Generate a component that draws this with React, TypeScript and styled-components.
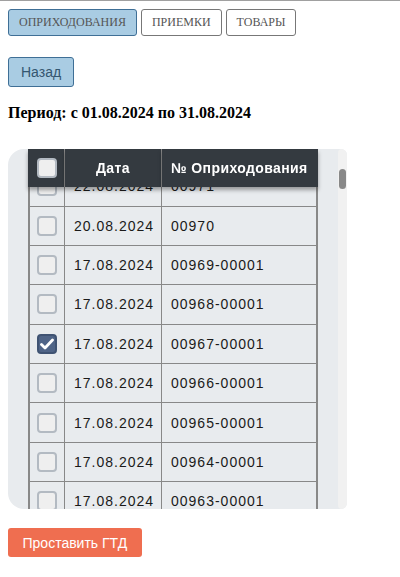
import React, { useLayoutEffect, useRef } from 'react';
import styled, { createGlobalStyle } from 'styled-components';

const Global = createGlobalStyle`
  html, body { margin: 0; padding: 0; background: #fff; }
  body { border-top: 1px solid #a0a0a0; }
`;

const Page = styled.div`
  padding: 8px 8px 0 8px;
  display: flex;
  flex-direction: column;
  align-items: flex-start;
`;

const Tabs = styled.div`
  display: flex;
  gap: 4px;
`;

const Tab = styled.button<{ $active?: boolean }>`
  height: 27px;
  padding: 0 10px;
  box-sizing: border-box;
  font-family: 'Liberation Serif', 'Times New Roman', serif;
  font-size: 12px;
  text-transform: uppercase;
  color: #555;
  background: ${(p) => (p.$active ? '#a9cce3' : '#fff')};
  border: 1px solid ${(p) => (p.$active ? '#3f6f96' : '#777')};
  border-radius: 3px;
  cursor: pointer;
`;

const BackButton = styled.button`
  margin-top: 21px;
  height: 30px;
  padding: 0 12px;
  box-sizing: border-box;
  font-family: 'Liberation Sans', Arial, sans-serif;
  font-size: 14px;
  color: #34566f;
  background: #a9cce3;
  border: 1px solid #3f6f96;
  border-radius: 3px;
`;

const Period = styled.div`
  margin-top: 17px;
  font-family: 'Liberation Serif', 'Times New Roman', serif;
  font-weight: bold;
  font-size: 16px;
  color: #000;
`;

const Frame = styled.div`
  margin-top: 27px;
  width: 339px;
  height: 360px;
  display: flex;
  background: #e8ebee;
  border-radius: 16px 6px 6px 16px;
  overflow: hidden;
`;

const Scroller = styled.div`
  flex: 1;
  height: 100%;
  overflow-y: scroll;
  scrollbar-width: none;
  &::-webkit-scrollbar { display: none; }
`;

const Track = styled.div`
  width: 9px;
  height: 100%;
  padding-top: 20px;
  box-sizing: border-box;
  background: #f1f1f1;
  border-radius: 4px;
`;

const Thumb = styled.div`
  width: 7px;
  height: 20px;
  margin: 0 auto;
  background: #888;
  border-radius: 4px;
`;

const Table = styled.table`
  margin: 0 20px;
  width: 290px;
  border-collapse: separate;
  border-spacing: 0;
  table-layout: fixed;
  font-family: 'Liberation Sans', Arial, sans-serif;
  font-size: 14px;
  letter-spacing: 1px;
`;

const Th = styled.th<{ $w: number; $center?: boolean }>`
  position: sticky;
  top: 0;
  z-index: 2;
  width: ${(p) => p.$w}px;
  height: 38px;
  padding: 0 9px;
  box-sizing: border-box;
  background: #343a40;
  color: #fff;
  font-weight: bold;
  letter-spacing: 0.4px;
  white-space: nowrap;
  text-align: ${(p) => (p.$center ? 'center' : 'left')};
  border-right: 1px solid #888;
  box-shadow: 0 3px 4px rgba(0, 0, 0, 0.35);
  &:first-child { border-left: 2px solid #343a40; padding: 0 0 0 7px; }
  &:last-child { border-right: 2px solid #343a40; }
`;

const Td = styled.td`
  height: 38.4px;
  padding: 0 9px;
  box-sizing: content-box;
  color: #1a1a1a;
  border-right: 1px solid #888;
  border-bottom: 1px solid #888;
  white-space: nowrap;
  &:first-child { border-left: 2px solid #888; padding: 0 0 0 7px; }
  &:last-child { border-right: 2px solid #888; }
`;

const Box = styled.span<{ $checked?: boolean }>`
  display: flex;
  align-items: center;
  justify-content: center;
  width: 20px;
  height: 20px;
  box-sizing: border-box;
  border-radius: 4px;
  border: 2px solid ${(p) => (p.$checked ? '#3f5373' : '#b3bac2')};
  background: ${(p) => (p.$checked ? '#4f6487' : '#efefef')};
`;

const Submit = styled.button`
  margin-top: 19px;
  height: 29px;
  padding: 0 14.5px;
  box-sizing: border-box;
  font-family: 'Liberation Sans', Arial, sans-serif;
  font-size: 14px;
  color: #fff;
  background: #ef6e50;
  border: none;
  border-radius: 3px;
`;

const Check = ({ checked }: { checked?: boolean }) => (
  <Box $checked={checked}>
    {checked && (
      <svg width="14" height="12" viewBox="0 0 14 12">
        <path d="M1.5 6.5 L5 10 L12.5 2" fill="none" stroke="#fff" strokeWidth="2.8" strokeLinecap="round" strokeLinejoin="round" />
      </svg>
    )}
  </Box>
);

type Row = { date: string; num: string; checked?: boolean };

const buildRows = (): Row[] => {
  const rows: Row[] = [];
  const early = ['31.08.2024', '30.08.2024', '29.08.2024', '28.08.2024', '27.08.2024', '26.08.2024', '24.08.2024', '23.08.2024', '22.08.2024'];
  early.forEach((d, i) => rows.push({ date: d, num: String(979 - i).padStart(5, '0') }));
  rows.push({ date: '20.08.2024', num: '00970' });
  for (let n = 969; n >= 963; n--) {
    rows.push({ date: '17.08.2024', num: `00${n}-00001`, checked: n === 967 });
  }
  let n = 962;
  while (rows.length < 40) {
    const day = Math.max(1, 16 - Math.floor((rows.length - 17) / 4));
    rows.push({ date: `${String(day).padStart(2, '0')}.08.2024`, num: `00${n}-00001` });
    n--;
  }
  return rows;
};

const rows = buildRows();

export default function App() {
  const ref = useRef<HTMLDivElement>(null);
  useLayoutEffect(() => {
    if (ref.current) ref.current.scrollTop = 335;
  }, []);
  return (
    <>
      <Global />
      <Page>
        <Tabs>
          <Tab $active>Оприходования</Tab>
          <Tab>Приемки</Tab>
          <Tab>Товары</Tab>
        </Tabs>
        <BackButton>Назад</BackButton>
        <Period>Период: с 01.08.2024 по 31.08.2024</Period>
        <Frame>
          <Scroller ref={ref}>
            <Table>
              <thead>
                <tr>
                  <Th $w={37}><Check /></Th>
                  <Th $w={97} $center>Дата</Th>
                  <Th $w={156}>№ Оприходования</Th>
                </tr>
              </thead>
              <tbody>
                {rows.map((r, i) => (
                  <tr key={i}>
                    <Td><Check checked={r.checked} /></Td>
                    <Td>{r.date}</Td>
                    <Td>{r.num}</Td>
                  </tr>
                ))}
              </tbody>
            </Table>
          </Scroller>
          <Track>
            <Thumb />
          </Track>
        </Frame>
        <Submit>Проставить ГТД</Submit>
      </Page>
    </>
  );
}
